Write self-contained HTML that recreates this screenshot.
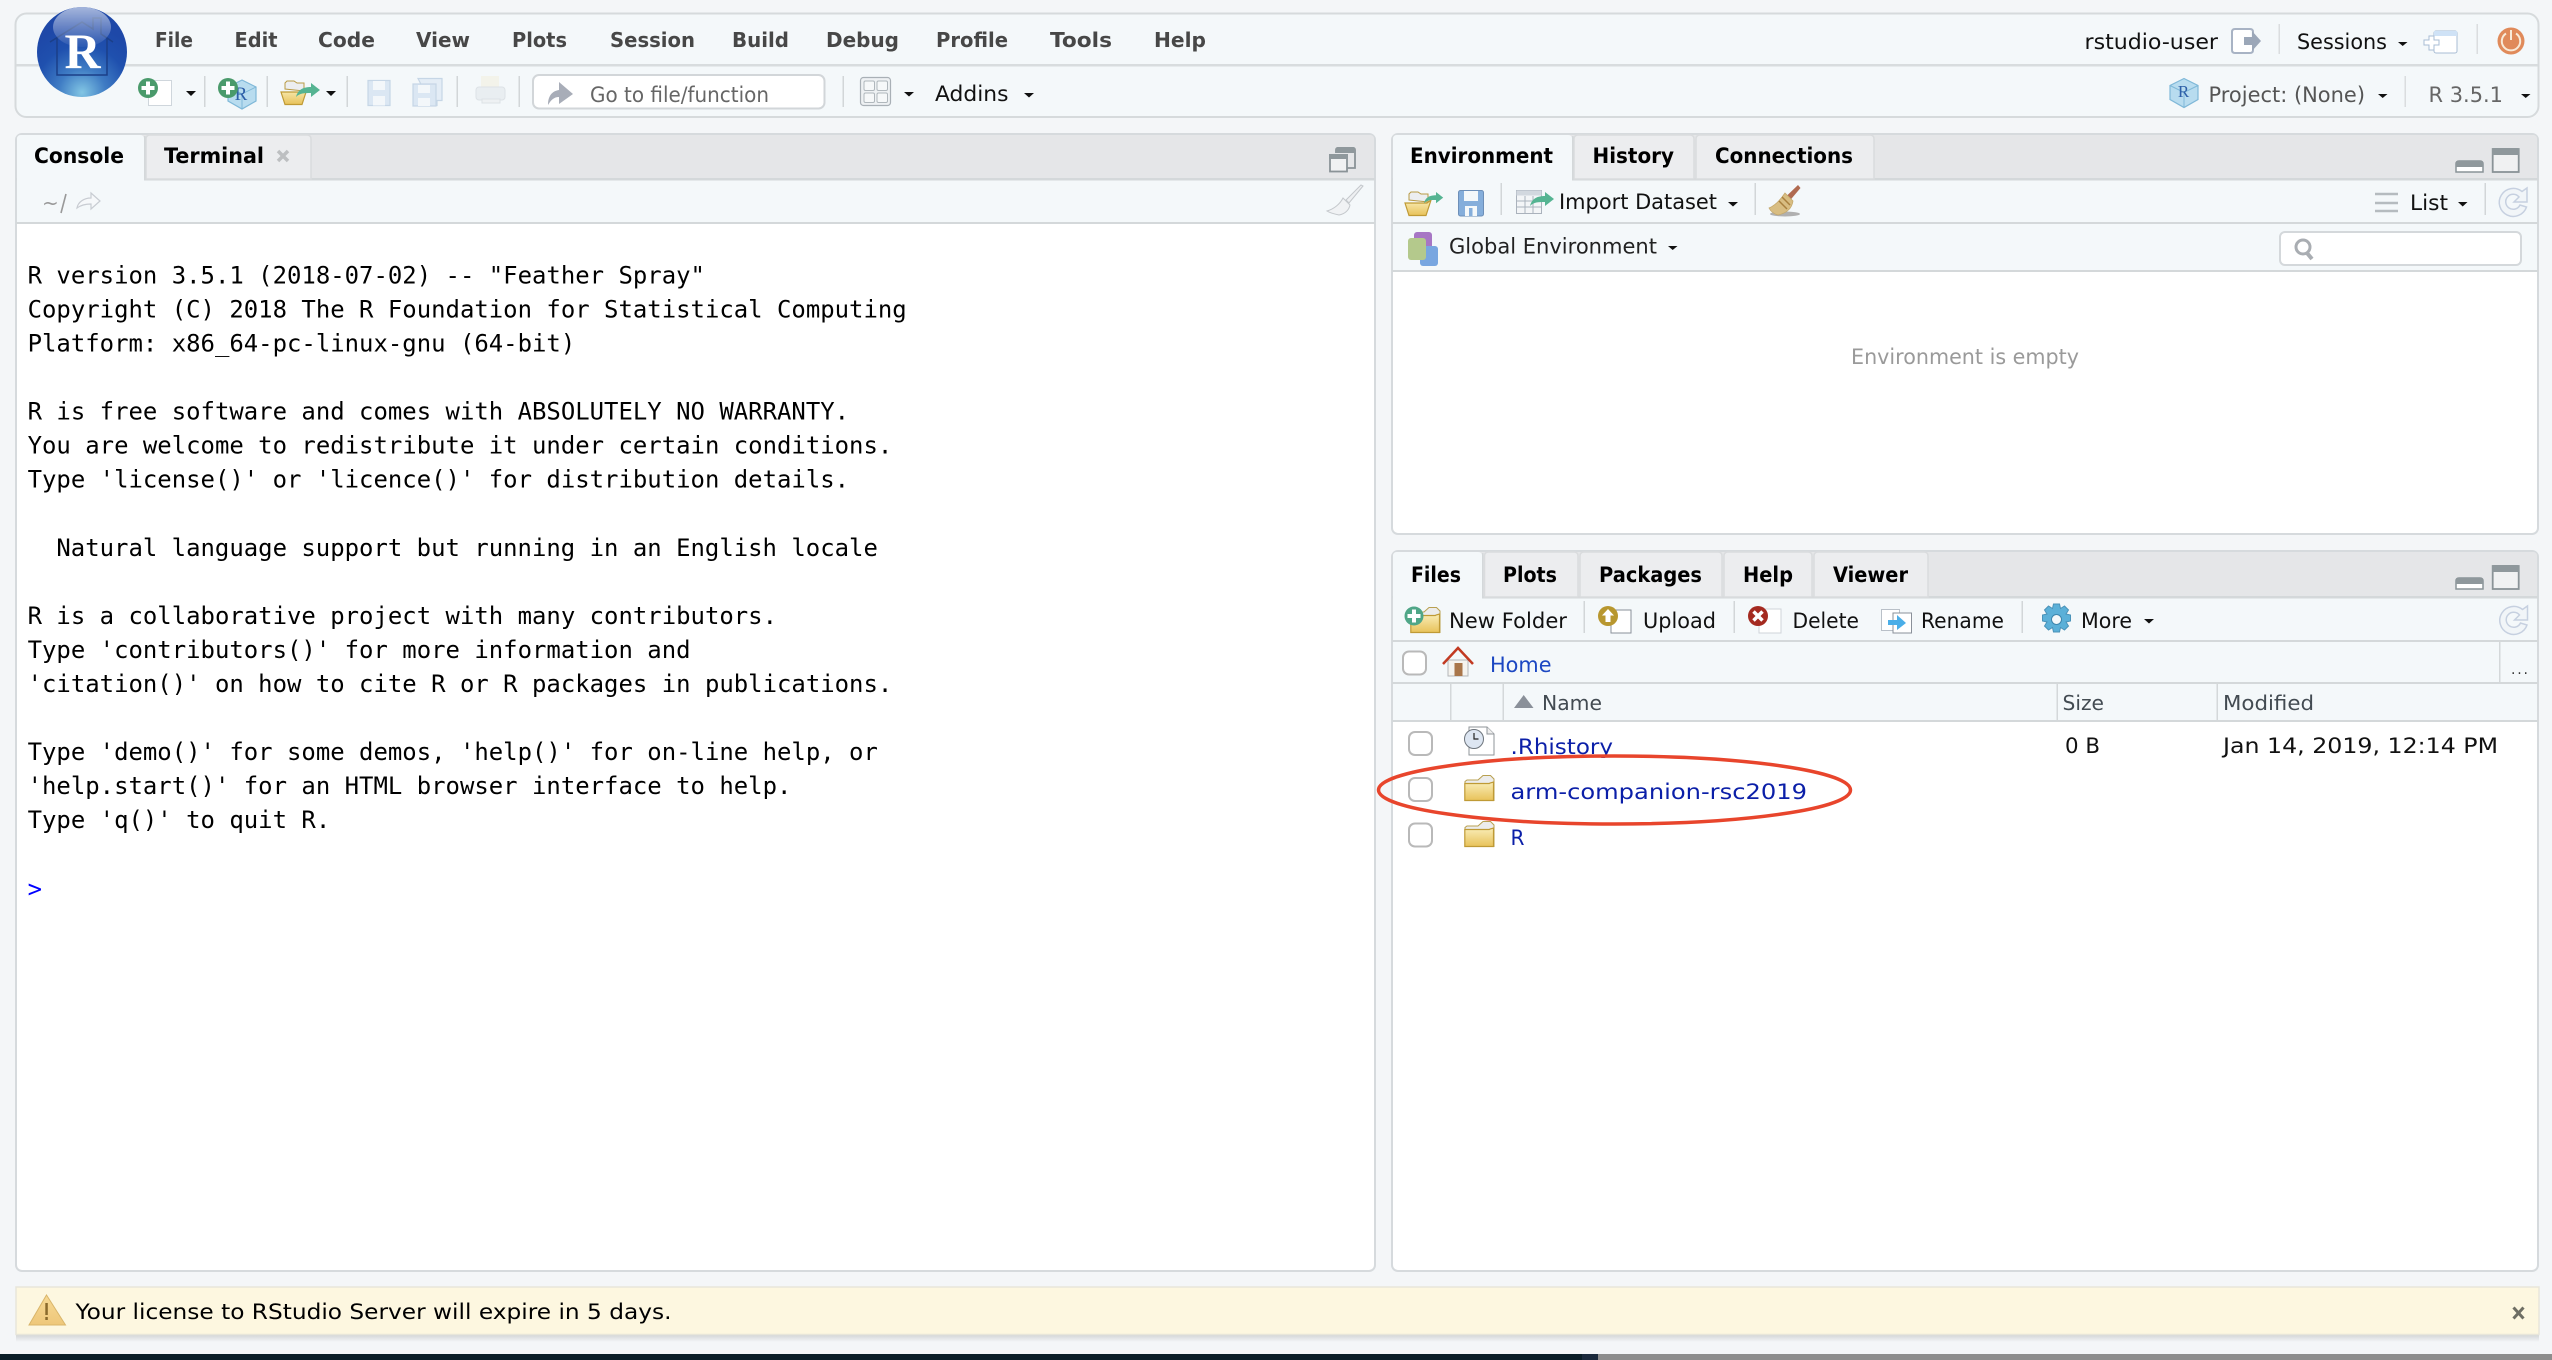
<!DOCTYPE html>
<html lang="en"><head><meta charset="utf-8"><title>RStudio</title>
<style>
html,body{margin:0;padding:0;background:#f4f6f8;width:2552px;height:1360px;overflow:hidden}
svg{display:block}
text{font-family:"DejaVu Sans","Liberation Sans",sans-serif;font-size:21px;fill:#111}
.b{font-weight:bold;fill:#000}
.m{font-weight:bold;fill:#474747}
.g{fill:#555}
.h{fill:#434b52;font-size:20.5px}
.l{fill:#0b1fa8}
.c{font-family:"DejaVu Sans Mono","Liberation Mono",monospace;font-size:23.94px;fill:#000}
</style></head><body>
<svg xmlns="http://www.w3.org/2000/svg" width="2552" height="1360" viewBox="0 0 2552 1360">
<defs>
<radialGradient id="lg" cx="0.5" cy="0.95" r="0.75"><stop offset="0" stop-color="#82c6e4"/><stop offset="0.35" stop-color="#3f7cc4"/><stop offset="0.7" stop-color="#1f50ae"/><stop offset="1" stop-color="#1e48a8"/></radialGradient>
<linearGradient id="hl" x1="0" y1="0" x2="0" y2="1"><stop offset="0" stop-color="#fff" stop-opacity=".6"/><stop offset="1" stop-color="#fff" stop-opacity=".05"/></linearGradient>
<linearGradient id="fo" x1="0" y1="0" x2="0" y2="1"><stop offset="0" stop-color="#f9edb8"/><stop offset="1" stop-color="#e8c25a"/></linearGradient>
<linearGradient id="wn" x1="0" y1="0" x2="0" y2="1"><stop offset="0" stop-color="#f7d994"/><stop offset="1" stop-color="#eec77a"/></linearGradient>
<linearGradient id="msg" x1="0" y1="0" x2="0" y2="1"><stop offset="0" stop-color="#cfd1d2"/><stop offset="1" stop-color="#f4f6f8"/></linearGradient>
<clipPath id="rowclip"><rect x="1500" y="725" width="300" height="33"/></clipPath>
<g id="folder"><path d="M1 25V6.500L3 5h11l5-4.500h7.500L30 4v21.500H1z" fill="#ececec" stroke="#b9a050" stroke-width="1"/><path d="M.8 25.500V8.500h24.500L26 8l3.500-1v18.500z" fill="url(#fo)" stroke="#bf9a35" stroke-width="1.200"/></g>
<g id="arrow"><path d="M0 14C2 6 8 4 15 4V0l9 7-9 7v-4C8 10 4 10 0 14z" fill="#55b492"/></g>
<g id="openf"><path d="M5 9V3l2-2h7l3 2h7v8z" fill="#eceef0" stroke="#b99b45"/><path d="M1 12h22l4-3-5 15.500H5z" fill="url(#fo)" stroke="#bf9a35" stroke-width="1.200"/></g>
<g id="refresh"><path d="M23 4.500L28 1V15H15L20 10A7.500 7.500 0 1 0 21 18L27.500 20A14 14 0 1 1 23 4.500z" fill="#f1f5f8" stroke="#c6d0e0" stroke-width="1.500"/></g>
<g id="cb"><rect x="1" y="1" width="23" height="23" rx="6" fill="#fff" stroke="#b9b9b9" stroke-width="2"/></g>
<g id="minmax"><path d="M0 24v-8q0-3 3-3h21q3 0 3 3v8z" fill="#fff" stroke="#8a9397" stroke-width="1.500"/><path d="M0 24v-8q0-3 3-3h21q3 0 3 3v3H0z" fill="#8f989c"/><rect x="36.700" y="1" width="26" height="23" fill="#f0f1f2" stroke="#8a9397" stroke-width="1.800"/><path d="M36 5V2q0-2 2-2h23q2 0 2 2v5H36z" fill="#8f989c"/></g>
<g id="cube"><path d="M15 0l14 7v14l-14 8-14-8V7z" fill="#b8dcef" stroke="#7fb8d8" stroke-width="1.200"/><path d="M1 7l14 7 14-7M15 14v15" fill="none" stroke="#7fb8d8" stroke-width="1"/></g>
</defs>

<rect width="2552" height="1360" fill="#f4f6f8"/>

<!-- top toolbar -->
<rect x="15.500" y="13.500" width="2523" height="103.500" rx="11" fill="#f4f8fa" stroke="#d6dadc" stroke-width="2"/>
<rect x="16" y="64" width="2522" height="2.500" fill="#d8dcde"/>

<!-- logo -->
<circle cx="82" cy="52" r="45" fill="url(#lg)"/>
<path d="M50 42L82 22l11 7v-11h8v16l12 8M57 38v37h50V38" fill="none" stroke="#1b3f88" stroke-width="1.500"/>
<ellipse cx="82" cy="27" rx="29" ry="20" fill="url(#hl)"/>
<text x="82.500" y="68" text-anchor="middle" style="font-family:'Liberation Serif',serif;font-size:50px;fill:#fff;font-weight:bold">R</text>

<!-- menu -->
<text class="m" x="155" y="47" textLength="38" lengthAdjust="spacingAndGlyphs" style="font-size:20.500px">File</text>
<text class="m" x="234.500" y="47" textLength="43" lengthAdjust="spacingAndGlyphs" style="font-size:20.500px">Edit</text>
<text class="m" x="318" y="47" textLength="57" lengthAdjust="spacingAndGlyphs" style="font-size:20.500px">Code</text>
<text class="m" x="416" y="47" textLength="54" lengthAdjust="spacingAndGlyphs" style="font-size:20.500px">View</text>
<text class="m" x="512" y="47" textLength="55" lengthAdjust="spacingAndGlyphs" style="font-size:20.500px">Plots</text>
<text class="m" x="610" y="47" textLength="85" lengthAdjust="spacingAndGlyphs" style="font-size:20.500px">Session</text>
<text class="m" x="732" y="47" textLength="57" lengthAdjust="spacingAndGlyphs" style="font-size:20.500px">Build</text>
<text class="m" x="826" y="47" textLength="73" lengthAdjust="spacingAndGlyphs" style="font-size:20.500px">Debug</text>
<text class="m" x="936" y="47" textLength="72" lengthAdjust="spacingAndGlyphs" style="font-size:20.500px">Profile</text>
<text class="m" x="1050" y="47" textLength="62" lengthAdjust="spacingAndGlyphs" style="font-size:20.500px">Tools</text>
<text class="m" x="1154" y="47" textLength="52" lengthAdjust="spacingAndGlyphs" style="font-size:20.500px">Help</text>

<!-- top right -->
<text x="2084.500" y="49" textLength="133.500" lengthAdjust="spacingAndGlyphs">rstudio-user</text>
<path d="M2250 29h-15q-3 0-3 3v18q0 3 3 3h15q3 0 3-3v-2M2253 34v-2q0-3-3-3" fill="#fff" stroke="#a8b3c4" stroke-width="2"/>
<path d="M2244 37h8v-6l9 10-9 10v-6h-8z" fill="#9ba7b8"/>
<rect x="2278.500" y="24" width="1.500" height="30" fill="#dadddf"/>
<text x="2297" y="49" textLength="90" lengthAdjust="spacingAndGlyphs">Sessions</text>
<polygon points="2398,42 2407.500,42 2402.700,46" fill="#111"/>
<rect x="2434" y="31" width="23" height="22" rx="2" fill="#fff" stroke="#a9bdd4"/>
<rect x="2434" y="31" width="23" height="5" fill="#cfe2f6"/>
<path d="M2429 36h5v4h5v5h-5v5h-5v-5h-5v-5h5z" fill="#fff" stroke="#a9bdd4"/>
<rect x="2476.500" y="24" width="1.500" height="30" fill="#dadddf"/>
<circle cx="2511" cy="41" r="13.500" fill="#e08a5a"/>
<path d="M2506 33.500a9.200 9.200 0 1 0 10 0M2511 30v10" fill="none" stroke="#f8ead8" stroke-width="2"/>

<text class="g" x="2208.500" y="102" textLength="156.500" lengthAdjust="spacingAndGlyphs">Project: (None)</text>
<use href="#cube" x="2169" y="78.500"/>
<text x="2183.500" y="97" text-anchor="middle" style="font-family:'Liberation Serif',serif;font-size:17px;fill:#2d5fa8">R</text>
<polygon points="2378,94 2387.500,94 2382.700,98" fill="#111"/>
<rect x="2404.500" y="76" width="1.500" height="31" fill="#dadddf"/>
<text x="2428.500" y="102" textLength="74.500" lengthAdjust="spacingAndGlyphs" style="fill:#666">R 3.5.1</text>
<polygon points="2521,94 2530.500,94 2525.700,98" fill="#111"/>

<!-- row 2 icons -->
<rect x="148.500" y="80.500" width="23" height="25" fill="#fff" stroke="#cfd6dc"/>
<circle cx="148" cy="88" r="10" fill="#4a9a6b"/>
<path d="M146 81.500h4v4.500h4.500v4h-4.500v4.500h-4v-4.500h-4.500v-4h4.500z" fill="#fff"/>
<polygon points="186,91 196,91 191,96" fill="#111"/>
<rect x="204" y="76" width="1.500" height="31" fill="#d2d6d8"/>
<use href="#cube" x="227" y="80"/>
<text x="241" y="100" text-anchor="middle" style="font-family:'Liberation Serif',serif;font-size:19px;fill:#2d5fa8">R</text>
<circle cx="228" cy="88" r="10" fill="#4a9a6b"/>
<path d="M226 81.500h4v4.500h4.500v4h-4.500v4.500h-4v-4.500h-4.500v-4h4.500z" fill="#fff"/>
<rect x="266.500" y="76" width="1.500" height="31" fill="#d2d6d8"/>
<use href="#openf" x="280" y="80"/>
<use href="#arrow" x="296" y="83"/>
<polygon points="326,91 336,91 331,96" fill="#111"/>
<rect x="346.500" y="76" width="1.500" height="31" fill="#d2d6d8"/>
<g fill="#dbe7f3" stroke="#c6d6e6" stroke-width="1.200">
<path d="M368 80.500h22v25h-22z"/>
<path d="M418 78.500h24v22h-5v5h-5z" fill="#e4edf6"/>
<path d="M413 84h23v22h-23z"/></g>
<rect x="373" y="81" width="12" height="9" fill="#f3f7fa"/><rect x="373" y="96" width="12" height="9.500" fill="#f3f7fa"/>
<rect x="418" y="85" width="12" height="8" fill="#f3f7fa"/><rect x="418" y="98" width="12" height="8" fill="#f3f7fa"/>
<rect x="456.500" y="76" width="1.500" height="31" fill="#d2d6d8"/>
<rect x="481" y="76" width="18" height="13" fill="#f3f3ea"/>
<rect x="476" y="87" width="29" height="13" rx="3" fill="#e9eef1" stroke="#dde2e6"/>
<rect x="482" y="99" width="18" height="4" fill="#eef1f3" stroke="#dde2e6"/>
<rect x="518.500" y="76" width="1.500" height="31" fill="#d2d6d8"/>
<rect x="533" y="75" width="291.500" height="33.500" rx="6" fill="#fff" stroke="#d2d6d9" stroke-width="2"/>
<path d="M548 105c0-9 4-14 11-15v-8l14 12-14 10v-7c-5 0-8 3-11 8z" fill="#a8adb8"/>
<text x="590" y="102" textLength="179" lengthAdjust="spacingAndGlyphs" style="fill:#666">Go to file/function</text>
<rect x="842.500" y="76" width="1.500" height="31" fill="#d2d6d8"/>
<rect x="860.500" y="77.500" width="30" height="28" rx="3" fill="#eef1f3" stroke="#a9b0b6" stroke-width="1.200"/>
<g fill="#f6f8f9" stroke="#b0b7bc"><rect x="864" y="81" width="10.500" height="9.500" rx="1.500"/><rect x="877" y="81" width="10.500" height="9.500" rx="1.500"/><rect x="864" y="93" width="10.500" height="9.500" rx="1.500"/><rect x="877" y="93" width="10.500" height="9.500" rx="1.500"/></g>
<polygon points="904,92 914,92 909,96.500" fill="#111"/>
<text x="935" y="101" textLength="73.500" lengthAdjust="spacingAndGlyphs">Addins</text>
<polygon points="1024,93 1034,93 1029,97.500" fill="#111"/>

<!-- left pane -->
<rect x="16" y="134" width="1359" height="1137" rx="6" fill="#fff" stroke="#d6dadd" stroke-width="2"/>
<path d="M17 178V139q0-4 4-4h1349q4 0 4 4v39z" fill="#e5e6e8"/>
<rect x="17" y="180" width="1357" height="42" fill="#f4f8fa"/>
<rect x="16" y="178" width="1359" height="2.500" fill="#d4d8da"/>
<rect x="16" y="222" width="1359" height="2" fill="#d4d8da"/>
<path d="M146 179V139q0-4 4-4h157q4 0 4 4v40z" fill="#ecedef" stroke="#dadcde" stroke-width="1.500"/>
<path d="M17 181V139q0-4 4-4h119q4 0 4 4v42z" fill="#f4f8fa"/>
<rect x="144" y="136" width="1.500" height="44" fill="#d4d8da"/>
<text class="b" x="34" y="163" textLength="90" lengthAdjust="spacingAndGlyphs">Console</text>
<text class="b" x="164" y="163" textLength="100" lengthAdjust="spacingAndGlyphs">Terminal</text>
<path d="M278 151l10 10M288 151l-10 10" stroke="#bdbfc1" stroke-width="3.500"/>
<path d="M1336 153v-3q0-2 2-2h15q2 0 2 2v18h-8" fill="none" stroke="#8a9397" stroke-width="1.800"/>
<path d="M1338 147h15q2 0 2 2v4h-19v-4q0-2 2-2z" fill="#8f989c"/>
<rect x="1330" y="155" width="17" height="16.500" fill="#f0f1f2" stroke="#8a9397" stroke-width="1.800"/>
<rect x="1329" y="154" width="19" height="5" fill="#8f989c"/>
<text x="42" y="210" style="fill:#999;font-size:20px">~</text>
<path d="M66 194l-5 19" stroke="#999" stroke-width="1.600"/>
<path d="M77 208c1-6 7-10 14-10v-5l9 8-9 8v-5c-6 0-10 1-14 4z" fill="#f6f8fa" stroke="#c8ccd2" stroke-width="1.200"/>
<path d="M1363 186l-14 17-3-3 15-15z" fill="#eef0f2" stroke="#c4c8cc"/>
<path d="M1343 198l7 7c-1 5-5 9-11 10-5-1-9-2-12-4 7-2 13-7 16-13z" fill="#f0f2f4" stroke="#c4c8cc"/>

<!-- console text -->
<g>
<text class="c" x="27.600" y="283.500">R version 3.5.1 (2018-07-02) -- "Feather Spray"</text>
<text class="c" x="27.600" y="317.500">Copyright (C) 2018 The R Foundation for Statistical Computing</text>
<text class="c" x="27.600" y="351.500">Platform: x86_64-pc-linux-gnu (64-bit)</text>
<text class="c" x="27.600" y="419.500">R is free software and comes with ABSOLUTELY NO WARRANTY.</text>
<text class="c" x="27.600" y="453.500">You are welcome to redistribute it under certain conditions.</text>
<text class="c" x="27.600" y="487.500">Type 'license()' or 'licence()' for distribution details.</text>
<text class="c" x="56.400" y="556">Natural language support but running in an English locale</text>
<text class="c" x="27.600" y="624">R is a collaborative project with many contributors.</text>
<text class="c" x="27.600" y="658">Type 'contributors()' for more information and</text>
<text class="c" x="27.600" y="692">'citation()' on how to cite R or R packages in publications.</text>
<text class="c" x="27.600" y="760">Type 'demo()' for some demos, 'help()' for on-line help, or</text>
<text class="c" x="27.600" y="794">'help.start()' for an HTML browser interface to help.</text>
<text class="c" x="27.600" y="828">Type 'q()' to quit R.</text>
<text class="c" x="27.600" y="897" style="fill:#0000ff">&gt;</text>
</g>

<!-- environment pane -->
<rect x="1392" y="134" width="1146" height="400" rx="6" fill="#fff" stroke="#d6dadd" stroke-width="2"/>
<path d="M1393 178V139q0-4 4-4h1136q4 0 4 4v39z" fill="#e5e6e8"/>
<rect x="1393" y="180" width="1144" height="90" fill="#f4f8fa"/>
<rect x="1392" y="178" width="1146" height="2.500" fill="#d4d8da"/>
<rect x="1392" y="222" width="1146" height="2" fill="#d4d8da"/>
<rect x="1392" y="270" width="1146" height="2" fill="#d4d8da"/>
<path d="M1574 179V139q0-4 4-4h112q4 0 4 4v40z" fill="#ecedef" stroke="#dadcde" stroke-width="1.500"/>
<path d="M1696 179V139q0-4 4-4h170q4 0 4 4v40z" fill="#ecedef" stroke="#dadcde" stroke-width="1.500"/>
<path d="M1393 181V139q0-4 4-4h171q4 0 4 4v42z" fill="#f4f8fa"/>
<rect x="1572" y="136" width="1.500" height="44" fill="#d4d8da"/>
<text class="b" x="1410" y="163" textLength="143" lengthAdjust="spacingAndGlyphs">Environment</text>
<text class="b" x="1592.500" y="163" textLength="81.500" lengthAdjust="spacingAndGlyphs">History</text>
<text class="b" x="1715" y="163" textLength="138" lengthAdjust="spacingAndGlyphs">Connections</text>
<use href="#minmax" x="2456" y="148"/>
<use href="#openf" x="1404" y="191"/>
<use href="#arrow" transform="translate(1424 192) scale(.8)"/>
<rect x="1458.500" y="190.500" width="25" height="25.500" rx="2" fill="#85aedb" stroke="#6d8fb8"/>
<rect x="1464" y="191" width="14" height="10" fill="#f4f8fa"/><rect x="1465" y="206" width="12" height="10" fill="#f4f8fa"/><rect x="1469" y="208" width="3.500" height="8" fill="#85aedb"/>
<rect x="1500.500" y="183" width="1.500" height="32" fill="#d2d6d8"/>
<rect x="1516.500" y="190.500" width="25" height="23" fill="#f3f5f7" stroke="#aab2bc"/>
<rect x="1516.500" y="190.500" width="25" height="5" fill="#d2d8df"/>
<path d="M1525 196v17M1533 196v17M1517 201h24M1517 207h24" stroke="#aab2bc"/>
<use href="#arrow" x="1530" y="192"/>
<text x="1559" y="209" textLength="158" lengthAdjust="spacingAndGlyphs">Import Dataset</text>
<polygon points="1728,202 1738,202 1733,206.500" fill="#111"/>
<rect x="1754.500" y="183" width="1.500" height="32" fill="#d2d6d8"/>
<ellipse cx="1785" cy="214" rx="15" ry="2.500" fill="#b0b0b0"/>
<path d="M1798 185l2.500 3-11 13-4-4z" fill="#b06a50"/>
<path d="M1785 193L1793 201C1792 208 1787 213 1778 215C1774 214 1771 212 1769 208C1776 205 1781 199 1785 193z" fill="#d8bd82" stroke="#c4a86c" stroke-width=".8"/>
<path d="M1782 197l8 8M1779 201l8 8" stroke="#a9803e" stroke-width="1.500"/>
<path d="M2375 194h23M2375 203h23M2375 211h23" stroke="#b5bbbf" stroke-width="2.500"/>
<text x="2410" y="210" textLength="38" lengthAdjust="spacingAndGlyphs">List</text>
<polygon points="2458,202 2467.500,202 2462.700,206.500" fill="#111"/>
<rect x="2484.500" y="183" width="1.500" height="32" fill="#d2d6d8"/>
<use href="#refresh" x="2499" y="187"/>
<rect x="1414" y="232" width="18" height="18" rx="3" fill="#a776c4"/>
<rect x="1420" y="246" width="18" height="20" rx="3" fill="#78a6e0"/>
<rect x="1408" y="238" width="18" height="22" rx="3" fill="#b4c98c"/>
<text x="1449" y="253.500" textLength="208" lengthAdjust="spacingAndGlyphs" style="fill:#222">Global Environment</text>
<polygon points="1668,246 1677.500,246 1672.700,250" fill="#111"/>
<rect x="2280" y="232" width="241" height="33" rx="5" fill="#fff" stroke="#d4d8db" stroke-width="2"/>
<circle cx="2303" cy="247" r="7" fill="#fff" stroke="#a9adb2" stroke-width="3"/>
<path d="M2307 253l5 6" stroke="#a9adb2" stroke-width="4"/>
<text x="1851" y="364" textLength="228" lengthAdjust="spacingAndGlyphs" style="fill:#9a9a9a">Environment is empty</text>

<!-- files pane -->
<rect x="1392" y="551" width="1146" height="720" rx="6" fill="#fff" stroke="#d6dadd" stroke-width="2"/>
<path d="M1393 596V556q0-4 4-4h1136q4 0 4 4v40z" fill="#e5e6e8"/>
<rect x="1393" y="598" width="1144" height="123" fill="#f4f8fa"/>
<rect x="1392" y="596" width="1146" height="2.500" fill="#d4d8da"/>
<rect x="1392" y="640" width="1146" height="2" fill="#d4d8da"/>
<rect x="1392" y="682" width="1146" height="2" fill="#d4d8da"/>
<rect x="1392" y="720" width="1146" height="2" fill="#d4d8da"/>
<path d="M1484.500 597V556q0-4 4-4h85.500q4 0 4 4v41z" fill="#ecedef" stroke="#dadcde" stroke-width="1.500"/>
<path d="M1580 597V556q0-4 4-4h134q4 0 4 4v41z" fill="#ecedef" stroke="#dadcde" stroke-width="1.500"/>
<path d="M1724 597V556q0-4 4-4h80q4 0 4 4v41z" fill="#ecedef" stroke="#dadcde" stroke-width="1.500"/>
<path d="M1814 597V556q0-4 4-4h106q4 0 4 4v41z" fill="#ecedef" stroke="#dadcde" stroke-width="1.500"/>
<path d="M1393 599V556q0-4 4-4h81q4 0 4 4v43z" fill="#f4f8fa"/>
<rect x="1482" y="553" width="1.500" height="45" fill="#d4d8da"/>
<text class="b" x="1411" y="582" textLength="50" lengthAdjust="spacingAndGlyphs">Files</text>
<text class="b" x="1503" y="582" textLength="54" lengthAdjust="spacingAndGlyphs">Plots</text>
<text class="b" x="1599" y="582" textLength="103" lengthAdjust="spacingAndGlyphs">Packages</text>
<text class="b" x="1743" y="582" textLength="50" lengthAdjust="spacingAndGlyphs">Help</text>
<text class="b" x="1833" y="582" textLength="75" lengthAdjust="spacingAndGlyphs">Viewer</text>
<use href="#minmax" x="2456" y="565"/>

<!-- files toolbar -->
<use href="#folder" x="1410" y="607"/>
<circle cx="1414" cy="616" r="9.500" fill="#4fa687"/>
<path d="M1412 609.500h4v4.500h4.500v4h-4.500v4.500h-4v-4.500h-4.500v-4h4.500z" fill="#fff"/>
<text x="1449" y="628" textLength="118" lengthAdjust="spacingAndGlyphs">New Folder</text>
<rect x="1583.500" y="601" width="1.500" height="32" fill="#d2d6d8"/>
<path d="M1611 610h20v23h-20z" fill="#fff" stroke="#8a9099"/>
<circle cx="1608" cy="616" r="10" fill="#b8972f"/>
<path d="M1608 609l6 6.500h-3.500v6.500h-5v-6.500h-3.500z" fill="#fff"/>
<text x="1643" y="628" textLength="73" lengthAdjust="spacingAndGlyphs">Upload</text>
<rect x="1733.500" y="601" width="1.500" height="32" fill="#d2d6d8"/>
<path d="M1759 609h22v24h-22z" fill="#fff" stroke="#cfd4d9"/>
<circle cx="1758" cy="616" r="10" fill="#a42a20"/>
<path d="M1753.500 611.500l9 9M1762.500 611.500l-9 9" stroke="#fff" stroke-width="3.500"/>
<text x="1792.500" y="628" textLength="66.500" lengthAdjust="spacingAndGlyphs">Delete</text>
<path d="M1881.500 609.500h18v21h-18z" fill="#fff" stroke="#b9c0c8"/>
<path d="M1893 613h18.500v20H1893z" fill="#fff" stroke="#8a9099"/>
<path d="M1888 620h9v-5l9 8-9 7v-5h-9z" fill="#4aaee8"/>
<text x="1921" y="628" textLength="83" lengthAdjust="spacingAndGlyphs">Rename</text>
<rect x="2021.500" y="601" width="1.500" height="32" fill="#d2d6d8"/>
<g transform="translate(2056.500 619.500)"><path d="M-3-15.500h6l1 4.500 4-2.500 4 4-2.500 4 4.500 1v6l-4.500 1 2.500 4-4 4-4-2.500-1 4.500h-6l-1-4.500-4 2.500-4-4 2.500-4-4.500-1v-6l4.500-1-2.500-4 4-4 4 2.500z" fill="#5bb0d8" stroke="#4a92b8"/><circle r="5" fill="#f4f8fa" stroke="#3d86ad"/></g>
<text x="2081" y="628" textLength="51" lengthAdjust="spacingAndGlyphs">More</text>
<polygon points="2144,619 2154,619 2149,623.500" fill="#111"/>
<use href="#refresh" x="2499.500" y="605"/>

<!-- path row -->
<use href="#cb" x="1402" y="650.500"/>
<path d="M1448 660h20v16h-20z" fill="#f5f3ee" stroke="#b4b6b8"/>
<rect x="1454.500" y="663" width="8" height="13" fill="#a9764a"/>
<path d="M1443 664l15-16 15 16" fill="none" stroke="#c23a22" stroke-width="2.500"/>
<text x="1490" y="672" textLength="61.500" lengthAdjust="spacingAndGlyphs" style="fill:#1c47c2">Home</text>
<rect x="2499" y="642" width="1.500" height="41" fill="#d4d8da"/>
<text x="2511" y="674" textLength="17" lengthAdjust="spacing" style="fill:#333;font-size:14px">...</text>

<!-- header -->
<rect x="1450" y="684" width="1.500" height="37" fill="#d4d8da"/>
<rect x="1502.500" y="684" width="1.500" height="37" fill="#d4d8da"/>
<rect x="2056.500" y="684" width="1.500" height="37" fill="#d4d8da"/>
<rect x="2216.500" y="684" width="1.500" height="37" fill="#d4d8da"/>
<polygon points="1523.700,695 1533.500,708 1514,708" fill="#8a9099"/>
<text class="h" x="1542" y="710" textLength="60" lengthAdjust="spacingAndGlyphs">Name</text>
<text class="h" x="2062.500" y="710" textLength="41.500" lengthAdjust="spacingAndGlyphs">Size</text>
<text class="h" x="2223" y="710" textLength="91" lengthAdjust="spacingAndGlyphs">Modified</text>

<!-- rows -->
<use href="#cb" x="1408" y="731"/>
<use href="#cb" x="1408" y="777"/>
<use href="#cb" x="1408" y="822.500"/>
<path d="M1469 727h18l7 7v21h-25z" fill="#fff" stroke="#8f9499"/>
<path d="M1487 727v7h7" fill="#eee" stroke="#8f9499"/>
<circle cx="1474" cy="739" r="9.500" fill="#dde6f2" stroke="#6d747c"/>
<path d="M1474 733v6h4.500" fill="none" stroke="#222" stroke-width="1.200"/>
<text class="l" x="1510.500" y="754" textLength="102.500" lengthAdjust="spacingAndGlyphs" clip-path="url(#rowclip)">.Rhistory</text>
<text x="2065" y="753" textLength="35" lengthAdjust="spacingAndGlyphs">0 B</text>
<text x="2223" y="753" textLength="275" lengthAdjust="spacingAndGlyphs">Jan 14, 2019, 12:14 PM</text>
<use href="#folder" x="1464" y="775"/>
<text class="l" x="1510.500" y="799" textLength="296.500" lengthAdjust="spacingAndGlyphs">arm-companion-rsc2019</text>
<use href="#folder" x="1464" y="821"/>
<text class="l" x="1510.500" y="845" textLength="14" lengthAdjust="spacingAndGlyphs">R</text>
<ellipse cx="1614.500" cy="790" rx="236" ry="34" fill="none" stroke="#e8452c" stroke-width="3.500"/>

<!-- message bar -->
<rect x="16" y="1334" width="2523" height="8" fill="url(#msg)"/>
<rect x="16" y="1287" width="2523" height="47.500" fill="#fdf7e0" stroke="#e8e6da" stroke-width="1.500"/>
<path d="M46.500 1295l19 30H29z" fill="url(#wn)" stroke="#d9b56a"/>
<rect x="45.300" y="1303" width="2.500" height="12" fill="#8a6a2c"/><rect x="45.300" y="1317" width="2.500" height="3" fill="#8a6a2c"/>
<text x="75.500" y="1319" textLength="596" lengthAdjust="spacingAndGlyphs" style="fill:#000">Your license to RStudio Server will expire in 5 days.</text>
<path d="M2513.500 1307.500l10 11M2523.500 1307.500l-10 11" stroke="#6e6e64" stroke-width="3"/>

<!-- bottom strip -->
<rect x="0" y="1354" width="1582" height="6" fill="#0b1e28"/>
<rect x="1582" y="1354" width="16" height="6" fill="#1b2a3c"/>
<rect x="1598" y="1354" width="954" height="6" fill="#8d8d8d"/>
</svg>
</body></html>
